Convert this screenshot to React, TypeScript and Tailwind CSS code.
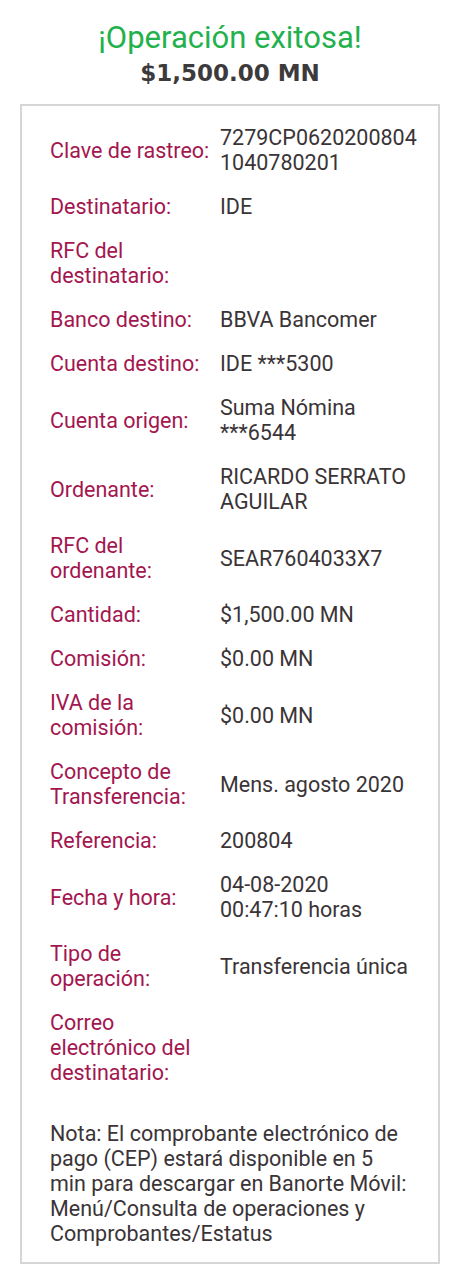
const rows: { label: string; value?: string[] }[] = [
  { label: "Clave de rastreo:", value: ["7279CP0620200804", "1040780201"] },
  { label: "Destinatario:", value: ["IDE"] },
  { label: "RFC del destinatario:" },
  { label: "Banco destino:", value: ["BBVA Bancomer"] },
  { label: "Cuenta destino:", value: ["IDE ***5300"] },
  { label: "Cuenta origen:", value: ["Suma Nómina", "***6544"] },
  { label: "Ordenante:", value: ["RICARDO SERRATO", "AGUILAR"] },
  { label: "RFC del ordenante:", value: ["SEAR7604033X7"] },
  { label: "Cantidad:", value: ["$1,500.00 MN"] },
  { label: "Comisión:", value: ["$0.00 MN"] },
  { label: "IVA de la comisión:", value: ["$0.00 MN"] },
  { label: "Concepto de Transferencia:", value: ["Mens. agosto 2020"] },
  { label: "Referencia:", value: ["200804"] },
  { label: "Fecha y hora:", value: ["04-08-2020", "00:47:10 horas"] },
  { label: "Tipo de operación:", value: ["Transferencia única"] },
  { label: "Correo electrónico del destinatario:" },
];

export default function App() {
  return (
    <div className="w-[460px] min-h-[1280px] bg-white pt-[20px] font-['Roboto',sans-serif]">
      <h1 className="text-center text-[31px] leading-[36px] text-[#22b14c]">¡Operación exitosa!</h1>
      <p className="mt-[2px] text-center text-[23px] leading-[30px] font-bold text-[#3d3a3c] font-['DejaVu_Sans',sans-serif]">
        $1,500.00 MN
      </p>
      <div className="mx-[20px] mt-[16px] w-[420px] border-2 border-[#d6d6d6] pl-[28px] pr-[28px] pt-[19px] pb-[16px]">
        <div className="flex flex-col gap-[19px]">
          {rows.map((r, i) => (
            <div key={i} className="flex items-center text-[21.5px] leading-[25px]">
              <div className="w-[170px] shrink-0 pr-2 text-[#a3164f]">{r.label}</div>
              <div className="text-[#3a3437]">
                {r.value?.map((v, j) => (
                  <div key={j}>{v}</div>
                ))}
              </div>
            </div>
          ))}
        </div>
        <p className="mt-[36px] text-[21.5px] leading-[25px] text-[#3a3437]">
          Nota: El comprobante electrónico de pago (CEP) estará disponible en 5 min para descargar en Banorte Móvil: Menú/Consulta de operaciones y Comprobantes/Estatus
        </p>
      </div>
    </div>
  );
}
